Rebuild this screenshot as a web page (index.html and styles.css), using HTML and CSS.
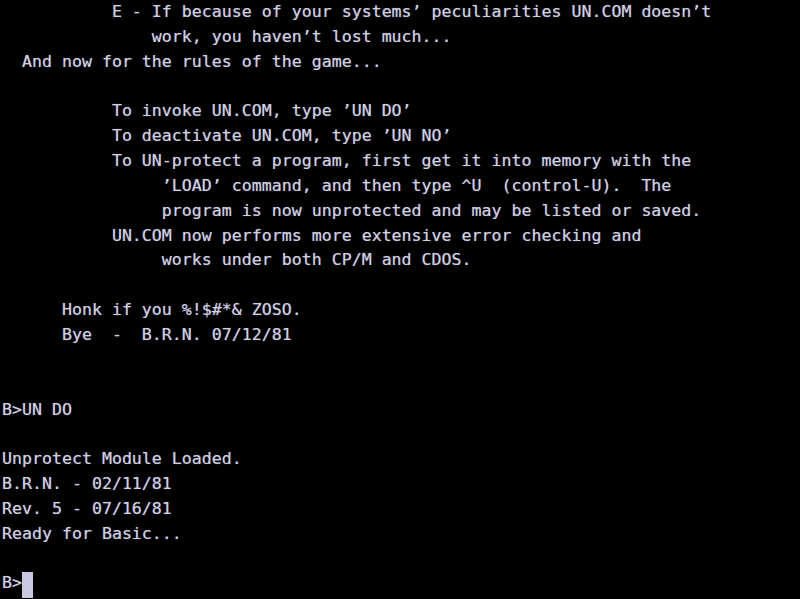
FILE: index.html
```html
<!DOCTYPE html>
<html>
<head>
<meta charset="utf-8">
<link rel="stylesheet" href="styles.css">
</head>
<body>
<pre class="screen">           E - If because of your systems’ peculiarities UN.COM doesn’t
               work, you haven’t lost much...
  And now for the rules of the game...

           To invoke UN.COM, type ’UN DO’
           To deactivate UN.COM, type ’UN NO’
           To UN-protect a program, first get it into memory with the
                ’LOAD’ command, and then type ^U  (control-U).  The
                program is now unprotected and may be listed or saved.
           UN.COM now performs more extensive error checking and
                works under both CP/M and CDOS.

      Honk if you %!$#*&amp; ZOSO.
      Bye  -  B.R.N. 07/12/81


B&gt;UN DO

Unprotect Module Loaded.
B.R.N. - 02/11/81
Rev. 5 - 07/16/81
Ready for Basic...

B&gt;<span class="cursor"></span></pre>
</body>
</html>
```

FILE: styles.css
```css
html, body {
  margin: 0;
  padding: 0;
  background: #000;
  width: 800px;
  height: 599px;
  overflow: hidden;
}

.screen {
  margin: 0 0 0 2px;
  font-family: "DejaVu Sans Mono", "Liberation Mono", monospace;
  font-size: 16.6px;
  line-height: 24.85px;
  color: #d0d0e4;
  text-shadow: 0 0 1px rgba(200, 200, 230, 0.6);
  white-space: pre;
}

.cursor {
  display: inline-block;
  width: 11px;
  height: 26px;
  background: #c8c8e0;
  vertical-align: -10px;
}
```
